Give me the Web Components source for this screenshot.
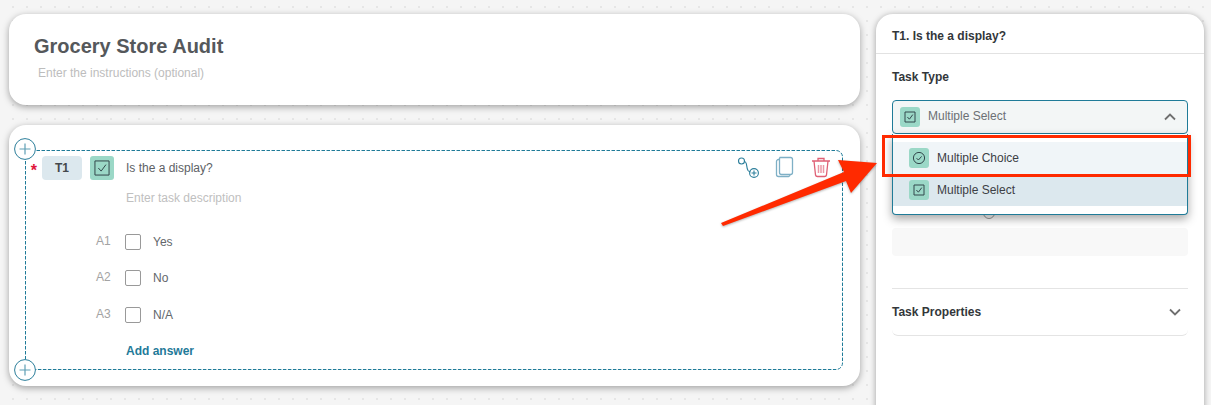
<!DOCTYPE html>
<html>
<head>
<meta charset="utf-8">
<title>Grocery Store Audit</title>
<style>
  html, body { margin: 0; padding: 0; height: 100%; }
  body { overflow: hidden; font-family: "Liberation Sans", Arial, sans-serif; }
</style>
</head>
<body>
<audit-page>
  <audit-header title-text="Grocery Store Audit" hint="Enter the instructions (optional)"></audit-header>
  <task-card>
    <task-answer code="A1">Yes</task-answer>
    <task-answer code="A2">No</task-answer>
    <task-answer code="A3">N/A</task-answer>
  </task-card>
  <task-panel slot="side"></task-panel>
  <callout-arrow slot="over"></callout-arrow>
</audit-page>

<script>
(function() {
  // Small teal square with the task type glyph
  class TypeIcon extends HTMLElement {
    constructor() {
      super();
      this.attachShadow({ mode: 'open' });
    }

    connectedCallback() {
      const size = Number(this.getAttribute('size')) || 20;
      const box = size > 20 ? '1.5 1.5 17 17' : '0 0 20 20';
      const glyph = this.getAttribute('kind') === 'choice'
        ? '<circle cx="10" cy="10" r="5.6"/><path d="M7.6 10.2l1.8 1.8 3.2-3.6"/>'
        : '<rect x="5" y="5" width="10" height="10"/><path d="M7.4 10l2 2.2 3.4-4.6"/>';
      this.shadowRoot.innerHTML = `
        <style>
          :host { display: block; width: ${size}px; height: ${size}px; flex-shrink: 0; }
          svg { display: block; width: 100%; height: 100%; background: #9bd8c7; border-radius: 3px; }
          svg * { vector-effect: non-scaling-stroke; }
        </style>
        <svg viewBox="${box}" fill="none" stroke="#33484c" stroke-width="1">${glyph}</svg>
      `;
    }
  }

  class AuditHeader extends HTMLElement {
    constructor() {
      super();
      this.attachShadow({ mode: 'open' });
    }

    connectedCallback() {
      this.shadowRoot.innerHTML = `
        <style>
          :host {
            display: block;
            height: 91px;
            box-sizing: border-box;
            padding: 21px 25px 0;
            background: #fff;
            border-radius: 17px;
            box-shadow: 0 2px 7px rgba(0, 0, 0, 0.35);
          }
          h1 { margin: 0; font-size: 20px; line-height: 23px; font-weight: 700; color: #55585b; }
          p { margin: 8px 0 0 4px; font-size: 12px; line-height: 14px; color: #bdbdbd; }
        </style>
        <h1>${this.getAttribute('title-text')}</h1>
        <p>${this.getAttribute('hint')}</p>
      `;
    }
  }

  class TaskAnswer extends HTMLElement {
    constructor() {
      super();
      this.attachShadow({ mode: 'open' });
    }

    connectedCallback() {
      this.shadowRoot.innerHTML = `
        <style>
          :host {
            display: flex;
            align-items: center;
            height: 16px;
            font-size: 12px;
            color: #63676b;
          }
          .code { width: 29px; margin-left: 70px; color: #a3a3a3; position: relative; top: -1px; }
          .box {
            width: 16px;
            height: 16px;
            box-sizing: border-box;
            border: 1px solid #999;
            border-radius: 2px;
            margin-right: 12px;
          }
        </style>
        <span class="code">${this.getAttribute('code')}</span>
        <span class="box"></span>
        <slot></slot>
      `;
    }
  }

  class TaskCard extends HTMLElement {
    constructor() {
      super();
      this.attachShadow({ mode: 'open' });
    }

    connectedCallback() {
      const plus = `<svg class="plus" viewBox="0 0 22 22" fill="none">
          <circle cx="11" cy="11" r="10.4" fill="#fff" stroke="#2d7f9b"/>
          <path d="M11 5.5v11M5.5 11h11" stroke="#5f9fb5" stroke-width="1.2"/>
        </svg>`;
      this.shadowRoot.innerHTML = `
        <style>
          :host {
            display: block;
            height: 261px;
            box-sizing: border-box;
            padding: 25px 16px 0;
            margin-top: 20px;
            background: #fff;
            border-radius: 17px;
            box-shadow: 0 2px 7px rgba(0, 0, 0, 0.35);
            position: relative;
          }
          .frame {
            height: 220px;
            box-sizing: border-box;
            padding: 6px 1px 0;
            position: relative;
          }
          /* dashed outline, drawn so the dash length can follow the reference */
          .outline { position: absolute; left: 0; top: 0; width: 818px; height: 220px; }
          .plus { position: absolute; left: 5px; width: 22px; height: 22px; }
          .plus.top { top: 13px; }
          .plus.bottom { top: 234px; }
          .head { display: flex; align-items: center; height: 24px; font-size: 12px; color: #5d6165; position: relative; }
          .star { width: 16px; text-align: right; color: #e0163c; font-size: 16px; font-weight: 700; line-height: 24px; position: relative; top: 3px; left: -5px; }
          .chip {
            width: 40px;
            height: 24px;
            background: #dce8ee;
            border-radius: 4px;
            font-weight: 700;
            color: #44484c;
            text-align: center;
            line-height: 24px;
            margin-right: 8px;
          }
          .desc { margin: 11px 0 28.6px 100px; font-size: 12px; line-height: 14px; color: #c0c0c0; position: relative; }
          .answers { display: flex; flex-direction: column; gap: 20.5px; position: relative; }
          .add { display: block; margin: 21.4px 0 0 100px; font-size: 12px; font-weight: 700; line-height: 14px; color: #1f7a99; position: relative; }
          .question { margin-left: 12px; flex: 1; }
          .tools { display: flex; align-items: flex-start; gap: 15px; margin-right: 12px; height: 24px; }
          .tools svg { display: block; }
        </style>
        <div class="frame">
          <svg class="outline" viewBox="0 0 818 220" fill="none" stroke="#1f7b98" stroke-width="1" stroke-dasharray="3.5 1.5">
            <path d="M.5 219.500V.5H811a6.500 6.500 0 0 1 6.500 6.500v206a6.500 6.500 0 0 1-6.500 6.500z"/>
          </svg>
          <div class="head">
            <span class="star">*</span>
            <span class="chip">T1</span>
            <type-icon kind="select" size="24"></type-icon>
            <span class="question">Is the a display?</span>
            <span class="tools">
              <svg width="23" height="23" viewBox="0 0 23 23" fill="none" stroke="#2d7f9b" stroke-width="1.1">
                <circle cx="4.5" cy="5" r="3"/>
                <path d="M7.5 5.5c3 .5 1.500 6 3.500 9 .8 1 1.500 1.300 2.500 1.500"/>
                <circle cx="17" cy="17" r="4.400"/>
                <path d="M17 14.500v5M14.500 17h5"/>
              </svg>
              <svg width="19" height="23" viewBox="0 0 19 23" fill="none" stroke="#7fb0c6" stroke-width="1.300" style="margin-right:2px">
                <path d="M5 1.500h10.500a2 2 0 0 1 2 2v13a2 2 0 0 1-2 2h-9a2 2 0 0 1-2-2v-14z"/>
                <path d="M4.500 3.500h-1a2 2 0 0 0-2 2v13a2 2 0 0 0 2 2h10a2 2 0 0 0 1.500-2"/>
              </svg>
              <svg width="20" height="23" viewBox="0 0 20 23" fill="none" stroke="#df5f74" stroke-width="1.300">
                <path d="M1 5h18M7 5V2.500h6V5"/>
                <path d="M3 5l1.500 14a2 2 0 0 0 2 1.500h7a2 2 0 0 0 2-1.500L17 5"/>
                <path d="M7.500 9v8M10 9v8M12.500 9v8" stroke="#eb98a6" stroke-width="1.500"/>
              </svg>
            </span>
          </div>
          <div class="desc">Enter task description</div>
          <div class="answers"><slot></slot></div>
          <span class="add">Add answer</span>
        </div>
        ${plus.replace('class="plus"', 'class="plus top"')}
        ${plus.replace('class="plus"', 'class="plus bottom"')}
      `;
    }
  }

  class TaskPanel extends HTMLElement {
    constructor() {
      super();
      this.attachShadow({ mode: 'open' });
    }

    connectedCallback() {
      this.shadowRoot.innerHTML = `
        <style>
          :host {
            display: block;
            height: 420px;
            background: #fff;
            border-radius: 17px 17px 0 0;
            box-shadow: 0 1px 6px rgba(0, 0, 0, 0.35);
            font-size: 12px;
            color: #33373b;
          }
          .title {
            height: 40px;
            box-sizing: border-box;
            padding: 15px 16px 0;
            line-height: 14px;
            font-weight: 700;
            border-bottom: 1px solid #e2e2e2;
          }
          .body { padding: 0 16px; position: relative; }
          .label { font-weight: 700; line-height: 14px; padding-top: 16px; }
          .select {
            height: 34px;
            margin-top: 16px;
            box-sizing: border-box;
            display: flex;
            align-items: center;
            padding: 0 11px 0 7px;
            background: #f3f6f6;
            border: 1px solid #1f7b98;
            border-radius: 4px;
            color: #6c7074;
          }
          .select span { flex: 1; margin-left: 8px; position: relative; top: -1px; }
          .chev { display: block; }
          .hidden-row { height: 22px; margin-top: 72px; padding: 1px 0 0 91px; box-sizing: border-box; }
          .hidden-row i { display: block; width: 12px; height: 12px; box-sizing: border-box; border: 1px solid #9a9a9a; border-radius: 50%; }
          .field { height: 28px; background: #f8f8f8; border-radius: 4px; }
          .props {
            margin-top: 32px;
            height: 48px;
            box-sizing: border-box;
            border-top: 1px solid #e4e4e4;
            border-bottom: 1px solid #e4e4e4;
            border-radius: 0 0 6px 6px;
            display: flex;
            align-items: center;
            justify-content: space-between;
            padding-right: 7px;
            font-weight: 700;
          }
          .menu {
            position: absolute;
            left: 16px;
            right: 16px;
            top: 80px;
            height: 81px;
            box-sizing: border-box;
            padding-top: 8px;
            background: #fff;
            border: 1px solid #1f7b98;
            border-top: 0;
            border-radius: 0 0 4px 4px;
            box-shadow: 0 4px 10px rgba(0, 0, 0, 0.35);
            color: #3c4045;
          }
          .opt { height: 32px; display: flex; align-items: center; gap: 8px; padding-left: 16px; }
          .opt.hover { background: #f0f5f8; }
          .opt.on { background: #dce8ee; }
        </style>
        <div class="title">T1. Is the a display?</div>
        <div class="body">
          <div class="label">Task Type</div>
          <div class="select">
            <type-icon kind="select"></type-icon>
            <span>Multiple Select</span>
            <svg class="chev" width="12" height="8" viewBox="0 0 12 8" fill="none" stroke="#6f6f6f" stroke-width="1.800"><path d="M1 6.500l5-5 5 5"/></svg>
          </div>
          <div class="hidden-row"><i></i></div>
          <div class="field"></div>
          <div class="props">
            <span>Task Properties</span>
            <svg class="chev" width="12" height="8" viewBox="0 0 12 8" fill="none" stroke="#6f6f6f" stroke-width="1.800"><path d="M1 1.500l5 5 5-5"/></svg>
          </div>
          <div class="menu">
            <div class="opt hover"><type-icon kind="choice"></type-icon>Multiple Choice</div>
            <div class="opt on"><type-icon kind="select"></type-icon>Multiple Select</div>
          </div>
        </div>
      `;
    }
  }

  // Red annotation drawn over the screenshot
  class CalloutArrow extends HTMLElement {
    constructor() {
      super();
      this.attachShadow({ mode: 'open' });
    }

    connectedCallback() {
      this.shadowRoot.innerHTML = `
        <style>
          :host { display: block; position: absolute; inset: 0; pointer-events: none; }
          svg { position: absolute; left: 0; top: 0; filter: drop-shadow(0 1px 1px rgba(0, 0, 0, 0.3)); }
          .box {
            position: absolute;
            left: 882px;
            top: 135px;
            width: 309px;
            height: 42px;
            box-sizing: border-box;
            border: 3px solid #ff2a00;
          }
        </style>
        <svg width="1211" height="405" viewBox="0 0 1211 405">
          <polygon fill="#ff2a00" points="721,223 844,172 838,160 877,163 851,193 846,181 723,226"/>
        </svg>
        <div class="box"></div>
      `;
    }
  }

  class AuditPage extends HTMLElement {
    constructor() {
      super();
      this.attachShadow({ mode: 'open' });
    }

    connectedCallback() {
      this.shadowRoot.innerHTML = `
        <style>
          :host {
            display: flex;
            gap: 16px;
            box-sizing: border-box;
            width: 1211px;
            height: 405px;
            padding: 14px 7px 0 9px;
            overflow: hidden;
            position: relative;
            background-color: #f5f5f5;
            background-image: radial-gradient(circle at 1px 1px, #e6e6e6 1px, transparent 1.2px);
            background-size: 14px 14px;
            background-position: 12px 6px;
          }
          .main { width: 851px; flex-shrink: 0; }
          .side { flex: 1; }
        </style>
        <div class="main"><slot></slot></div>
        <div class="side"><slot name="side"></slot></div>
        <slot name="over"></slot>
      `;
    }
  }

  customElements.define('type-icon', TypeIcon);
  customElements.define('audit-header', AuditHeader);
  customElements.define('task-answer', TaskAnswer);
  customElements.define('task-card', TaskCard);
  customElements.define('task-panel', TaskPanel);
  customElements.define('callout-arrow', CalloutArrow);
  customElements.define('audit-page', AuditPage);
})();
</script>
</body>
</html>
